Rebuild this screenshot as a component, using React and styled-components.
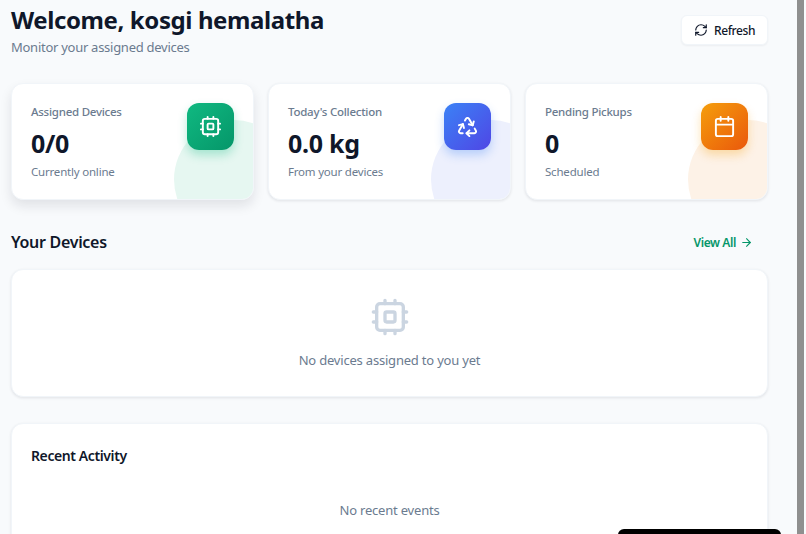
import React from 'react';
import styled, { createGlobalStyle } from 'styled-components';
import { Recycle, Calendar, RefreshCw, ArrowRight } from 'lucide-react';

const GlobalStyle = createGlobalStyle`
  html, body { margin: 0; padding: 0; height: 100%; overflow: hidden; }
  body { font-family: "Noto Sans", "Open Sans", sans-serif; background: #f8fafc; color: #0f172a; }
`;

const Shell = styled.div`
  display: flex;
  width: 806px;
  height: 534px;
  overflow: hidden;
  position: relative;
`;

const Main = styled.main`
  box-sizing: border-box;
  width: 768px;
  padding-left: 11px;
  flex: none;
`;

const Track = styled.div`
  margin-left: 29px;
  width: 7px;
  height: 534px;
  background: #8f8f8f;
  flex: none;
`;

const Header = styled.header`
  display: flex;
  justify-content: space-between;
  align-items: flex-start;
  height: 83px;
`;

const Title = styled.h1`
  margin: 0;
  font-size: 24px;
  line-height: 40px;
  font-weight: 700;
  letter-spacing: -0.4px;
  color: #0f172a;
`;

const Subtitle = styled.p`
  margin: 0;
  font-size: 13px;
  line-height: 14px;
  letter-spacing: -0.27px;
  color: #6b7b8f;
`;

const RefreshButton = styled.button`
  display: flex;
  align-items: center;
  gap: 6px;
  margin-top: 15px;
  height: 30px;
  width: 87px;
  padding: 0 0 0 12px;
  font: 500 12px "Noto Sans", sans-serif;
  letter-spacing: -0.4px;
  color: #0f172a;
  background: #fff;
  border: 1px solid #f1f5f9;
  border-radius: 6px;
  box-shadow: 0 1px 2px rgba(15, 23, 42, 0.05);
`;

const Cards = styled.section`
  display: grid;
  grid-template-columns: repeat(3, 1fr);
  column-gap: 14px;
`;

const Card = styled.div`
  position: relative;
  overflow: hidden;
  height: 117px;
  box-sizing: border-box;
  padding: 20px 19px;
  background: #fff;
  border: 1px solid #f1f5f9;
  border-radius: 12px;
  box-shadow: ${p => p.$raised
    ? '0 6px 12px rgba(15, 23, 42, 0.1)'
    : '0 1px 3px rgba(15, 23, 42, 0.1)'};
`;

const Blob = styled.div`
  position: absolute;
  right: -40px;
  bottom: -40px;
  width: 119px;
  height: 119px;
  border-radius: 50%;
  background: ${p => p.$color};
`;

const IconTile = styled.div`
  position: absolute;
  top: 19px;
  right: 19px;
  width: 47px;
  height: 47px;
  display: flex;
  align-items: center;
  justify-content: center;
  border-radius: 12px;
  color: #fff;
  background: ${p => p.$bg};
  box-shadow: 0 5px 10px ${p => p.$glow};
`;

const CardLabel = styled.div`
  font-size: 11.5px;
  line-height: 16px;
  font-weight: 500;
  letter-spacing: -0.25px;
  color: #6b7b8f;
`;

const CardValue = styled.div`
  margin-top: 7px;
  font-size: 25px;
  line-height: 32px;
  font-weight: 700;
  letter-spacing: -0.3px;
  color: #0f172a;
`;

const CardHint = styled.div`
  margin-top: 5px;
  font-size: 11.5px;
  line-height: 16px;
  letter-spacing: -0.2px;
  color: #6b7b8f;
`;

const SectionHead = styled.div`
  display: flex;
  justify-content: space-between;
  align-items: center;
  margin-top: 28px;
  height: 28px;
  padding-right: 15px;
`;

const SectionTitle = styled.h2`
  margin: 0;
  font-size: 16px;
  font-weight: 600;
  letter-spacing: -0.3px;
  color: #0f172a;
`;

const ViewAll = styled.a`
  display: flex;
  align-items: center;
  gap: 4px;
  font-size: 12px;
  font-weight: 600;
  letter-spacing: -0.4px;
  color: #059669;
`;

const Panel = styled.div`
  box-sizing: border-box;
  width: 757px;
  background: #fff;
  border: 1px solid #f1f5f9;
  border-radius: 12px;
  box-shadow: 0 1px 3px rgba(15, 23, 42, 0.1);
`;

const DevicesPanel = styled(Panel)`
  margin-top: 13px;
  height: 128px;
  display: flex;
  flex-direction: column;
  align-items: center;
  padding-top: 27px;
  color: #cbd5e1;
`;

const EmptyText = styled.p`
  margin: ${p => p.$top}px 0 0;
  font-size: 13px;
  line-height: 18px;
  letter-spacing: -0.2px;
  color: #6b7b8f;
  text-align: center;
`;

const ActivityPanel = styled(Panel)`
  margin-top: 26px;
  height: 160px;
  padding: 22px 19px;
`;

const ActivityTitle = styled.h3`
  margin: 0;
  font-size: 14px;
  line-height: 20px;
  font-weight: 600;
  letter-spacing: -0.4px;
  color: #0f172a;
`;

const Toast = styled.div`
  position: absolute;
  left: 618px;
  top: 529px;
  width: 163px;
  height: 20px;
  background: #000;
  border-radius: 6px;
`;

// older lucide chip: two pins per side
const Chip = ({ size, strokeWidth = 2 }) => (
  <svg width={size} height={size} viewBox="0 0 24 24" fill="none" stroke="currentColor" strokeWidth={strokeWidth} strokeLinecap="round" strokeLinejoin="round">
    <rect x="4" y="4" width="16" height="16" rx="2" />
    <rect x="9" y="9" width="6" height="6" rx="1" />
    <path d="M15 2v2M15 20v2M2 15h2M2 9h2M20 15h2M20 9h2M9 2v2M9 20v2" />
  </svg>
);

const stats = [
  { label: 'Assigned Devices', value: '0/0', hint: 'Currently online', Icon: Chip, bg: 'linear-gradient(135deg, #10b981, #059669)', glow: 'rgba(16,185,129,.3)', blob: '#e6f7f1', raised: true },
  { label: "Today's Collection", value: '0.0 kg', hint: 'From your devices', Icon: Recycle, bg: 'linear-gradient(135deg, #3b82f6, #4f46e5)', glow: 'rgba(59,130,246,.3)', blob: '#edf0fd' },
  { label: 'Pending Pickups', value: '0', hint: 'Scheduled', Icon: Calendar, bg: 'linear-gradient(135deg, #f59e0b, #ea580c)', glow: 'rgba(245,158,11,.3)', blob: '#fdf2e7' },
];

export default function App() {
  return (
    <Shell>
      <GlobalStyle />
      <Main>
        <Header>
          <div>
            <Title>Welcome, kosgi hemalatha</Title>
            <Subtitle>Monitor your assigned devices</Subtitle>
          </div>
          <RefreshButton><RefreshCw size={14} />Refresh</RefreshButton>
        </Header>

        <Cards>
          {stats.map(s => (
            <Card key={s.label} $raised={s.raised}>
              <Blob $color={s.blob} />
              <IconTile $bg={s.bg} $glow={s.glow}><s.Icon size={23} strokeWidth={2} /></IconTile>
              <CardLabel>{s.label}</CardLabel>
              <CardValue>{s.value}</CardValue>
              <CardHint>{s.hint}</CardHint>
            </Card>
          ))}
        </Cards>

        <SectionHead>
          <SectionTitle>Your Devices</SectionTitle>
          <ViewAll>View All <ArrowRight size={13} /></ViewAll>
        </SectionHead>
        <DevicesPanel>
          <Chip size={40} />
          <EmptyText $top={14}>No devices assigned to you yet</EmptyText>
        </DevicesPanel>

        <ActivityPanel>
          <ActivityTitle>Recent Activity</ActivityTitle>
          <EmptyText $top={35}>No recent events</EmptyText>
        </ActivityPanel>
      </Main>
      <Track />
      <Toast />
    </Shell>
  );
}
